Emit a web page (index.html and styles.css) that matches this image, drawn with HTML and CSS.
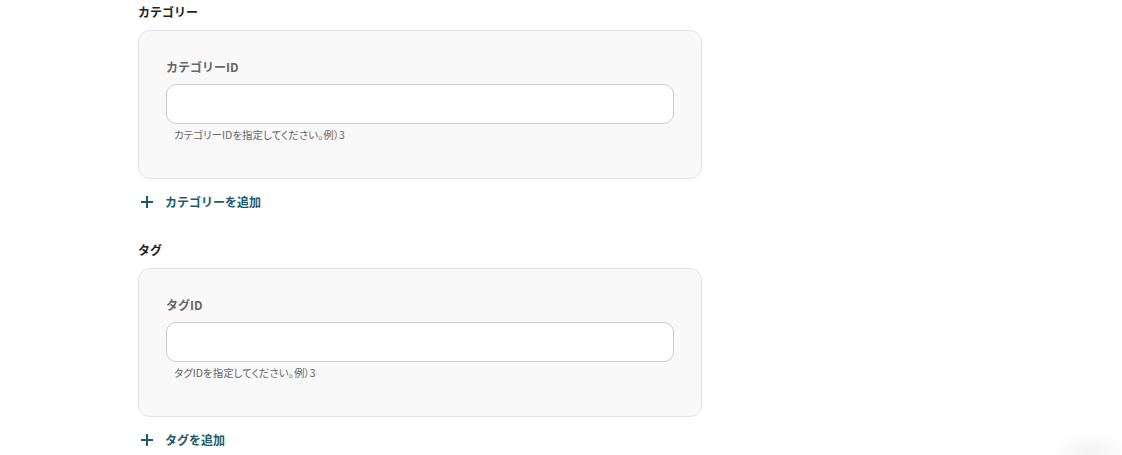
FILE: index.html
```html
<!DOCTYPE html>
<html lang="ja">
  <head>
    <meta charset="UTF-8" />
    <meta name="viewport" content="width=device-width, initial-scale=1.0" />
    <title>カテゴリー・タグ</title>
    <link rel="stylesheet" href="styles.css">
  </head>
  <body>
    <div class="form">
      <section class="group">
        <h2 class="group-title">カテゴリー</h2>
        <div class="card">
          <label class="field-label" for="category-id">カテゴリーID</label>
          <input class="field-input" id="category-id" type="text" />
          <p class="field-hint">カテゴリーIDを指定してください。例）3</p>
        </div>
        <button class="add-button" type="button">
          <svg width="14" height="14" viewBox="0 0 14 14"><path d="M7 1v12M1 7h12" stroke="currentColor" stroke-width="2" fill="none"/></svg>
          <span>カテゴリーを追加</span>
        </button>
      </section>

      <section class="group">
        <h2 class="group-title">タグ</h2>
        <div class="card">
          <label class="field-label" for="tag-id">タグID</label>
          <input class="field-input" id="tag-id" type="text" />
          <p class="field-hint">タグIDを指定してください。例）3</p>
        </div>
        <button class="add-button" type="button">
          <svg width="14" height="14" viewBox="0 0 14 14"><path d="M7 1v12M1 7h12" stroke="currentColor" stroke-width="2" fill="none"/></svg>
          <span>タグを追加</span>
        </button>
      </section>
    </div>

    <div class="floating-shadow"></div>
  </body>
</html>
```

FILE: styles.css
```css
html,
body {
  overflow: hidden;
}

body {
  margin: 0;
  font-family: "Noto Sans CJK JP", "Noto Sans", sans-serif;
  background-color: #fff;
  color: #222;
  height: 455px;
}

.form {
  display: flex;
  flex-direction: column;
  gap: 31px;
  padding: 3px 0 0 138px;
  width: 564px;
}

.group-title {
  margin: 0 0 9px;
  font-size: 12px;
  font-weight: 700;
  line-height: 18px;
  color: #222;
}

.card {
  display: flex;
  flex-direction: column;
  padding: 27px 27px 36px;
  background-color: #f9f9f9;
  border: 1px solid #e3e3e3;
  border-radius: 12px;
}

.field-label {
  font-size: 12px;
  font-weight: 700;
  line-height: 18px;
  color: #666;
  margin-bottom: 8px;
}

.field-input {
  height: 40px;
  box-sizing: border-box;
  border: 1px solid #c8ccd6;
  border-radius: 10px;
  background-color: #fff;
  padding: 0 12px;
  font: inherit;
}

.field-hint {
  margin: 4px 0 0 8px;
  font-size: 10.5px;
  line-height: 14px;
  color: #666;
  font-feature-settings: "palt";
}

.add-button {
  display: flex;
  align-items: center;
  gap: 11px;
  margin-top: 15px;
  padding: 0 0 0 2px;
  border: none;
  background: none;
  color: #1e5a69;
  font-family: inherit;
  font-size: 12px;
  font-weight: 700;
  line-height: 16px;
  cursor: pointer;
}

.add-button svg {
  display: block;
}

.floating-shadow {
  position: absolute;
  left: 1050px;
  top: 430px;
  width: 80px;
  height: 25px;
  background: radial-gradient(ellipse at 50% 100%, rgba(0, 0, 0, 0.05), rgba(0, 0, 0, 0) 70%);
}
```
